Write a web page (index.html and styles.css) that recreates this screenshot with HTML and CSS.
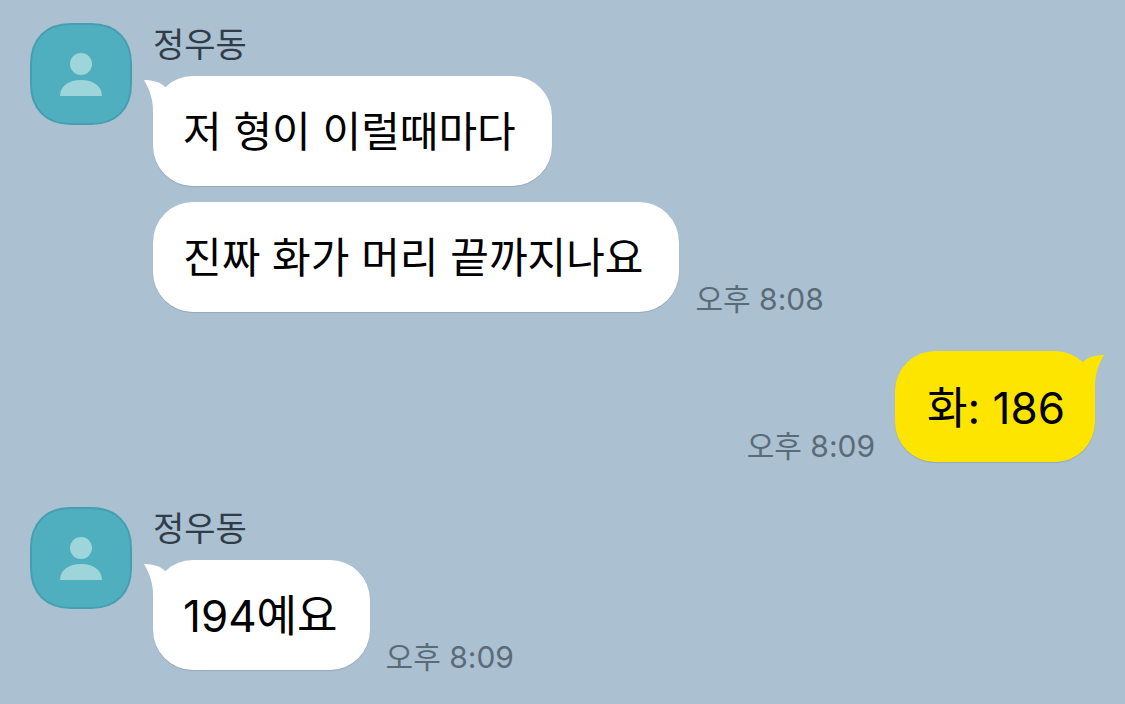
FILE: index.html
```
<!DOCTYPE html>
<html lang="ko">
<head>
    <meta charset="UTF-8">
    <meta name="viewport" content="width=device-width, initial-scale=1.0">
    <title>정우동</title>
    <link rel="stylesheet" href="styles.css">
</head>
<body>
    <!-- shared shapes -->
    <svg class="defs" aria-hidden="true">
        <symbol id="person" viewBox="0 0 102 102">
            <path class="avatar-bg" d="M41 1H61C86 1 101 16 101 41V61C101 86 86 101 61 101H41C16 101 1 86 1 61V41C1 16 16 1 41 1Z"/>
            <circle class="avatar-fg" cx="51" cy="41" r="11"/>
            <path class="avatar-fg" d="M30 73C30 63 39 57 51 57S72 63 72 73Z"/>
        </symbol>
        <symbol id="tail" viewBox="0 0 40 40">
            <path d="M0 4C9 4 16 6 21 11L40 12V40H9V35C9 24 6 14 0 4Z"/>
        </symbol>
    </svg>

    <main class="chat">
        <section class="group">
            <svg class="avatar" role="img" aria-label="프로필"><use href="#person"/></svg>
            <div class="messages">
                <div class="name">정우동</div>
                <div class="row">
                    <div class="bubble"><svg class="tail" aria-hidden="true"><use href="#tail"/></svg><p>저 형이 이럴때마다</p></div>
                </div>
                <div class="row">
                    <div class="bubble"><p>진짜 화가 머리 끝까지나요</p></div>
                    <time class="time">오후 8:08</time>
                </div>
            </div>
        </section>

        <section class="group mine">
            <div class="row">
                <time class="time">오후 8:09</time>
                <div class="bubble number"><svg class="tail" aria-hidden="true"><use href="#tail"/></svg><p>화: 186</p></div>
            </div>
        </section>

        <section class="group">
            <svg class="avatar" role="img" aria-label="프로필"><use href="#person"/></svg>
            <div class="messages">
                <div class="name">정우동</div>
                <div class="row">
                    <div class="bubble number"><svg class="tail" aria-hidden="true"><use href="#tail"/></svg><p>194예요</p></div>
                    <time class="time">오후 8:09</time>
                </div>
            </div>
        </section>
    </main>
</body>
</html>
```
FILE: styles.css
```
* {
    margin: 0;
    padding: 0;
    box-sizing: border-box;
}
body {
    font-family: Inter, "Noto Sans CJK KR", sans-serif;
    background-color: #abc0d1;
    color: #000;
}
.defs {
    position: absolute;
    width: 0;
    height: 0;
}
.chat {
    display: flex;
    flex-direction: column;
    gap: 39px;
    padding: 23px 30px 32px;
}
.group {
    display: flex;
    align-items: flex-start;
    gap: 21px;
}
.mine {
    justify-content: flex-end;
    margin-bottom: 6px;
}
.avatar {
    width: 102px;
    height: 102px;
    flex-shrink: 0;
}
.avatar-bg {
    fill: #4fafbe;
    stroke: #459fb0;
    stroke-width: 2;
}
.avatar-fg {
    fill: #9ed5da;
}
.messages {
    display: flex;
    flex-direction: column;
    gap: 16px;
}
.name {
    margin-bottom: -7px;
    font-size: 34px;
    line-height: 44px;
    color: #303d48;
}
.row {
    display: flex;
    align-items: flex-end;
    gap: 16px;
}
.bubble {
    position: relative;
    padding: 26px 36px 24px 30px;
    border-radius: 40px;
    background-color: #fff;
    box-shadow: 0 1px 1px rgba(60, 80, 100, 0.2);
    font-size: 42px;
    line-height: 60px;
}
.bubble p {
    position: relative;
}
.number {
    padding-right: 32px;
    font-size: 44px;
}
.tail {
    position: absolute;
    top: 0;
    left: -9px;
    width: 40px;
    height: 40px;
    fill: #fff;
}
.time {
    padding-bottom: 1px;
    font-size: 30px;
    line-height: 24px;
    color: #5a6b78;
    white-space: nowrap;
}
.mine .row {
    gap: 20px;
}
.mine .bubble {
    padding: 27px 30px 24px 32px;
    background-color: #fee500;
}
.mine .time {
    padding-bottom: 4px;
}
.mine .tail {
    left: auto;
    right: -9px;
    fill: #fee500;
    transform: scaleX(-1);
}
```
